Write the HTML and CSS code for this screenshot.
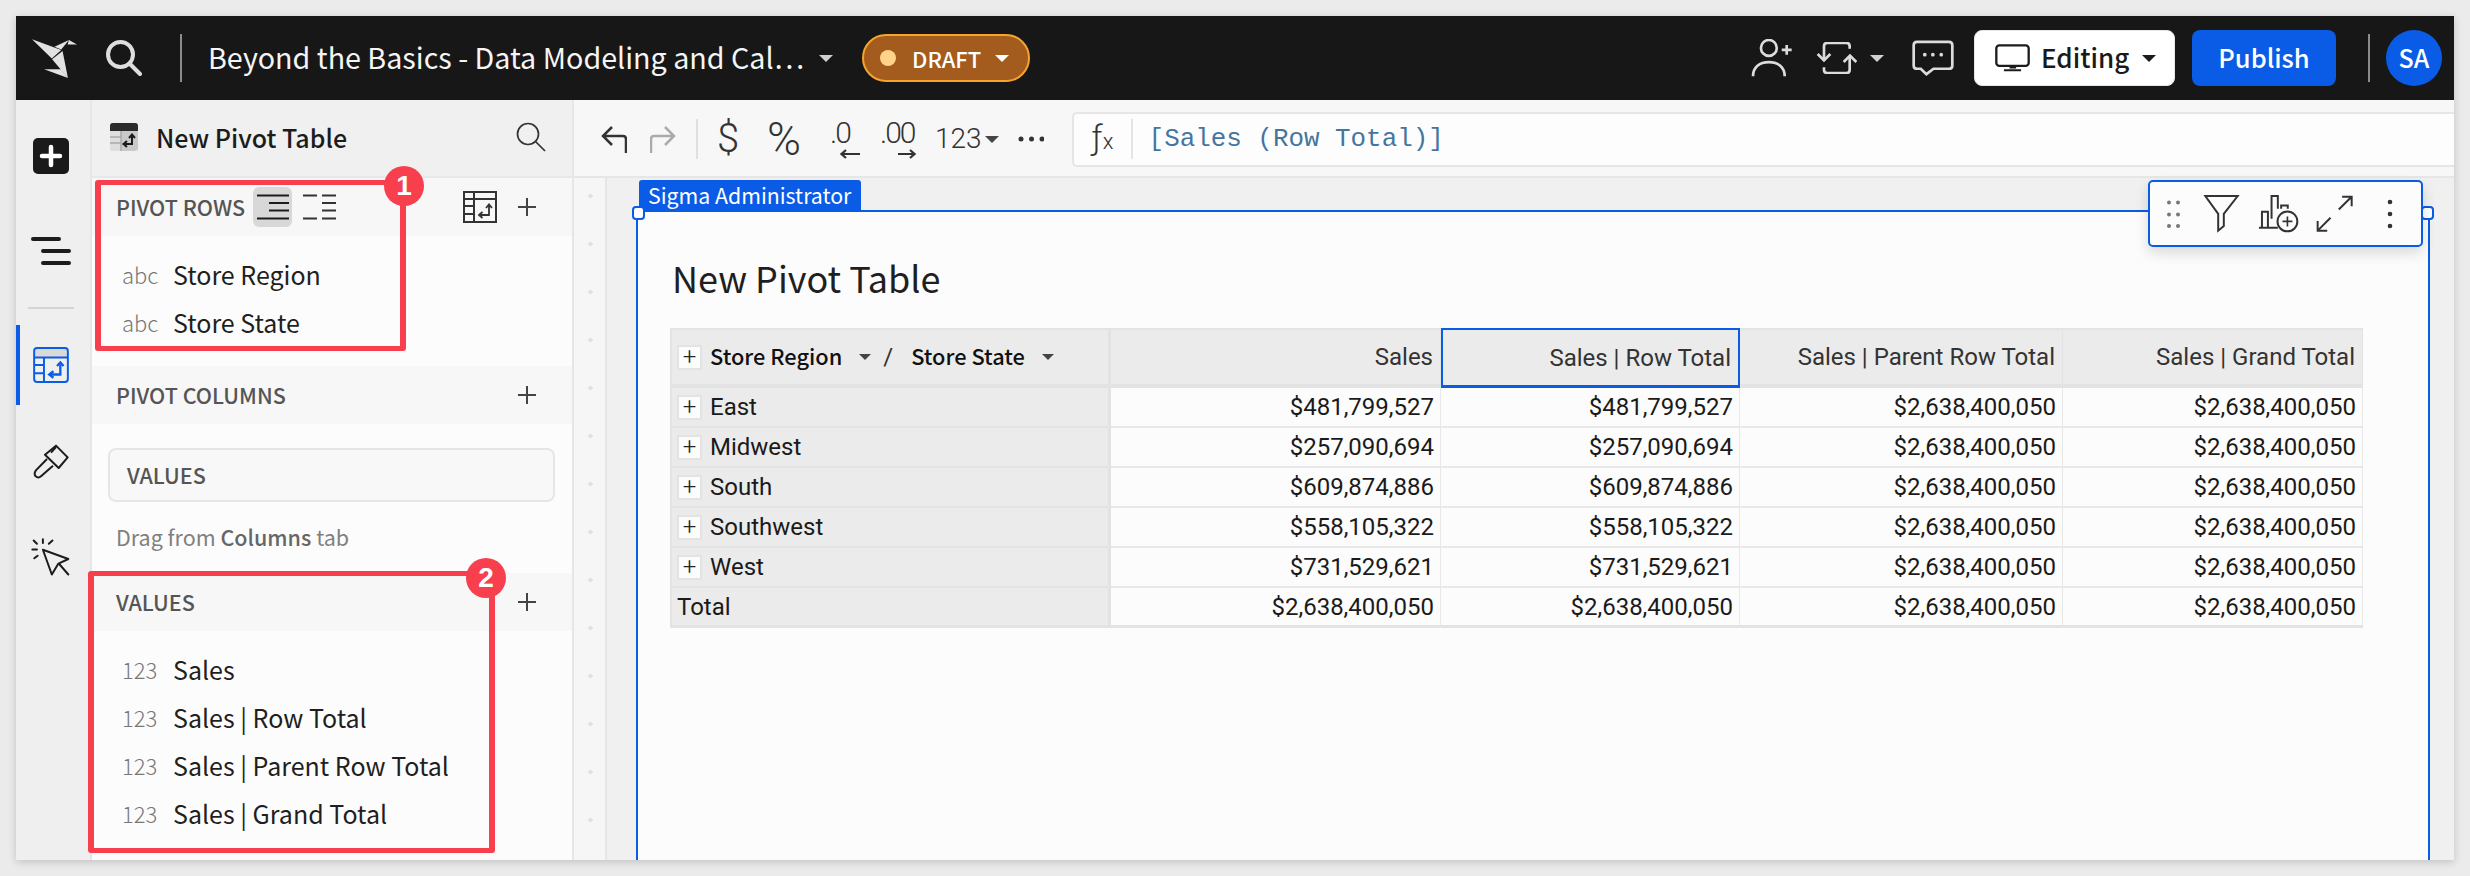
FILE: index.html
```html
<!DOCTYPE html>
<html lang="en">
<head>
<meta charset="utf-8">
<title>New Pivot Table</title>
<link rel="stylesheet" href="styles.css">
</head>
<body>
<div class="app">
  <header class="topbar">
    <svg class="logo" width="45" height="39" viewBox="48 62 134 116"><g fill="#e2e2e2"><path d="M48 63 135 95 107 120Z"/><path d="M115 85 158 65 135 93Z"/><path d="M158 65 182 78 154 78Z"/><path d="M108 122 139 98 155 178Z"/><path d="M84 152 135 152 155 178Z"/></g></svg>
    <svg class="top-search" width="36" height="36" viewBox="0 0 36 36" fill="none" stroke="#dedede" stroke-width="4" stroke-linecap="round"><circle cx="14.5" cy="14.5" r="12.5"/><path d="M23.5 23.5 34 34"/></svg>
    <span class="vbar bar-a"></span>
    <span class="doc-title">Beyond the Basics - Data Modeling and Cal…</span>
    <span class="caret caret-light doc-caret"></span>
    <button class="draft"><span class="draft-dot"></span><span>DRAFT</span><span class="caret caret-white draft-caret"></span></button>
    <span class="spacer"></span>
    <svg width="42" height="38" viewBox="40 65 125 115" fill="none" stroke="#dcdcdc" stroke-width="8"><circle cx="93" cy="92" r="24"/><path d="M45 178C45 150 65 135 93 135S141 150 141 178"/><path d="M147 83V113M132 98H162"/></svg>
    <svg class="ml-23" width="42" height="32" viewBox="232 72 124 96" fill="none" stroke="#dcdcdc" stroke-width="8"><path d="M255 125V85Q255 75 265 75H322Q332 75 332 85V92"/><path d="M332 115V155Q332 165 322 165H265Q255 165 255 155V148"/><path d="M236 108 255 127 274 108M314 132 333 113 352 132"/></svg>
    <span class="caret caret-light swap-caret"></span>
    <svg class="ml-28" width="42" height="36" viewBox="520 70 125 106" fill="none" stroke="#dcdcdc" stroke-width="8"><path d="M535 75H630Q640 75 640 85V145Q640 155 630 155H584L563 171 546 155H535Q525 155 525 145V85Q525 75 535 75Z"/><g fill="#dcdcdc" stroke="none"><circle cx="558" cy="113" r="5.5"/><circle cx="582" cy="113" r="5.5"/><circle cx="607" cy="113" r="5.5"/></g></svg>
    <button class="editing">
      <svg width="35" height="28" viewBox="763 78 106 84" fill="none" stroke="#1c1c1c" stroke-width="7"><rect x="767" y="82" width="98" height="62" rx="9"/><path d="M790 157H842M807 149H827" stroke-width="6"/></svg>
      <span class="editing-label">Editing</span>
      <span class="caret caret-dark editing-caret"></span>
    </button>
    <button class="publish">Publish</button>
    <span class="vbar bar-b"></span>
    <span class="avatar">SA</span>
  </header>

  <div class="main">
    <nav class="rail">
      <svg class="rail-add" width="36" height="36" viewBox="0 0 36 36"><rect width="36" height="36" rx="5" fill="#1a1a1a"/><path d="M18 9V27M9 18H27" stroke="#fff" stroke-width="4.5" stroke-linecap="round"/></svg>
      <svg class="rail-menu" width="40" height="30" viewBox="0 0 40 30" stroke="#1c1c1c" stroke-width="4" stroke-linecap="round"><path d="M2 3H28M12 15H38M12 27H38"/></svg>
      <span class="rail-div"></span>
      <span class="rail-active">
        <svg width="36" height="36" viewBox="39 53 109 110" fill="none" stroke="#0a5ce6" stroke-width="6"><path d="M45 85V66Q45 59 52 59H135Q142 59 142 66V85Z" fill="#d9d9d9" stroke="none"/><rect x="42" y="56" width="103" height="104" rx="9"/><path d="M42 85H145M72 85V160M42 108H72M42 133H72"/><path d="M122 106V137H92" stroke-width="7"/><path d="M101 127 88 137 101 147M112 111 122 100 132 111" stroke-width="7"/></svg>
      </span>
      <svg class="rail-brush" width="36" height="35" viewBox="36 345 108 105" fill="none" stroke="#1c1c1c" stroke-width="6" stroke-linejoin="round"><path d="M105 350 140 385 113 417 72 377Z"/><path d="M90 371 105 354"/><path d="M78 390 44 425Q38 435 44 442 52 449 60 442L96 410"/></svg>
      <svg class="rail-cursor" width="39" height="38" viewBox="32 625 118 114" fill="none" stroke="#1c1c1c" stroke-width="6" stroke-linecap="round" stroke-linejoin="round"><path d="M68 660 145 688 115 702 95 735Z"/><path d="M118 704 145 735M68 628V640M40 632 50 642M97 632 86 642M36 659H50M42 686 52 678"/></svg>
    </nav>

    <aside class="panel">
      <div class="panel-head">
        <svg width="28" height="28" viewBox="0 0 28 28"><rect width="28" height="28" rx="3" fill="#c9c9c9"/><path d="M3 0H25Q28 0 28 3V8H0V3Q0 0 3 0Z" fill="#2b2b2b"/><path d="M0 8H11V28H3Q0 28 0 25Z" fill="#dedede"/><path d="M0 14H11M0 20H11M11 8V28" stroke="#aaa" stroke-width="1.5"/><path d="M22 12V21H14M17 18 13.5 21 17 24M19 15 22 11.500 25 15" fill="none" stroke="#1c1c1c" stroke-width="2"/></svg>
        <span class="panel-title">New Pivot Table</span>
        <svg class="panel-search" width="30" height="30" viewBox="0 0 30 30" fill="none" stroke="#333" stroke-width="1.700"><circle cx="12" cy="12" r="10.500"/><path d="M19.500 19.500 29 29"/></svg>
      </div>

      <div class="sec-head">
        <span class="sec-label">PIVOT ROWS</span>
        <span class="toggle toggle-on"><svg width="32" height="26" viewBox="0 0 32 26" stroke="#1c1c1c" stroke-width="2"><path d="M0 1.500H32M12 9H32M12 16.500H32M0 24.500H32"/></svg></span>
        <span class="toggle"><svg width="33" height="26" viewBox="0 0 33 26" stroke="#333" stroke-width="2"><path d="M0 1.500H14M19 1.500H33M19 9H33M19 16.500H33M0 24.500H14M19 24.500H33"/></svg></span>
        <span class="spacer"></span>
        <svg class="sec-pivot" width="34" height="32" viewBox="0 0 34 32" fill="none" stroke="#333" stroke-width="2"><rect x="1" y="1" width="32" height="30"/><path d="M1 8H33M11 1V31M1 15H11M1 23H11"/><path d="M26 14V24H16M19.500 21 16 24 19.500 27M23 17 26 13.500 29 17" stroke-width="1.800"/></svg>
        <svg class="sec-plus sec-plus-near" width="18" height="18" viewBox="0 0 18 18" stroke="#444" stroke-width="2"><path d="M9 0V18M0 9H18"/></svg>
      </div>
      <ul class="fields fields-rows">
        <li class="field"><span class="ftype">abc</span><span>Store Region</span></li>
        <li class="field"><span class="ftype">abc</span><span>Store State</span></li>
      </ul>

      <div class="sec-head">
        <span class="sec-label">PIVOT COLUMNS</span>
        <span class="spacer"></span>
        <svg class="sec-plus" width="18" height="18" viewBox="0 0 18 18" stroke="#444" stroke-width="2"><path d="M9 0V18M0 9H18"/></svg>
      </div>
      <div class="dropbox">VALUES</div>
      <p class="hint">Drag from <b>Columns</b> tab</p>

      <div class="sec-head">
        <span class="sec-label">VALUES</span>
        <span class="spacer"></span>
        <svg class="sec-plus" width="18" height="18" viewBox="0 0 18 18" stroke="#444" stroke-width="2"><path d="M9 0V18M0 9H18"/></svg>
      </div>
      <ul class="fields">
        <li class="field"><span class="ftype">123</span><span>Sales</span></li>
        <li class="field"><span class="ftype">123</span><span>Sales | Row Total</span></li>
        <li class="field"><span class="ftype">123</span><span>Sales | Parent Row Total</span></li>
        <li class="field"><span class="ftype">123</span><span>Sales | Grand Total</span></li>
      </ul>
    </aside>

    <section class="work">
      <div class="toolbar">
        <svg class="t-undo" width="26" height="27" viewBox="0 0 26 27" fill="none" stroke="#333" stroke-width="2.500"><path d="M25 27V13Q25 10 22 10H2M11 1 2 10 11 19"/></svg>
        <svg class="t-redo" width="26" height="27" viewBox="0 0 26 27" fill="none" stroke="#aaa" stroke-width="2.500"><path d="M1 27V13Q1 10 4 10H24M15 1 24 10 15 19"/></svg>
        <span class="t-sep"></span>
        <span class="t-glyph t-dollar">$</span>
        <span class="t-glyph t-pct">%</span>
        <span class="t-dec t-dec1"><span class="t-dec-num">.0</span><svg width="20" height="10" viewBox="0 0 20 10" fill="none" stroke="#333" stroke-width="2.200"><path d="M20 5H2M6 1 1.500 5 6 9"/></svg></span>
        <span class="t-dec t-dec2"><span class="t-dec-num">.00</span><svg width="18" height="10" viewBox="0 0 18 10" fill="none" stroke="#333" stroke-width="2.200"><path d="M0 5H16M12 1 16.500 5 12 9"/></svg></span>
        <span class="t-num">123</span>
        <span class="caret caret-mid t-caret"></span>
        <svg class="t-more" width="26" height="6" viewBox="0 0 26 6" fill="#333"><circle cx="3" cy="3" r="2.500"/><circle cx="13.500" cy="3" r="2.500"/><circle cx="24" cy="3" r="2.500"/></svg>
        <div class="formula">
          <span class="fx"><span class="fx-f">ƒ</span><span class="fx-x">x</span></span>
          <span class="fx-div"></span>
          <code class="formula-text">[Sales (Row Total)]</code>
        </div>
      </div>

      <div class="canvas">
        <div class="gutter"></div>
        <div class="sheet">
          <div class="element">
            <span class="owner-tag">Sigma Administrator</span>
            <span class="handle handle-l"></span>
            <span class="handle handle-r"></span>
            <div class="float-tools">
              <svg width="16" height="28" viewBox="0 0 16 28" fill="#777"><circle cx="3" cy="2.500" r="2"/><circle cx="12" cy="2.500" r="2"/><circle cx="3" cy="14.500" r="2"/><circle cx="12" cy="14.500" r="2"/><circle cx="3" cy="26" r="2"/><circle cx="12" cy="26" r="2"/></svg>
              <svg class="ft-funnel" width="37" height="39" viewBox="190 76 112 116" fill="none" stroke="#333" stroke-width="6"><path d="M197 81H295L253 135V172L236 186V135Z"/></svg>
              <svg class="ft-bars" width="41" height="39" viewBox="352 76 124 116" fill="none" stroke="#333" stroke-width="6"><path d="M355 177H412M364 177V129H382V177M393 150V81H412V120M422 120V110H442V120"/><circle cx="441" cy="158" r="30"/><path d="M441 143V173M426 158H456" stroke-width="5"/></svg>
              <svg class="ft-expand" width="37" height="37" viewBox="526 76 112 112" fill="none" stroke="#333" stroke-width="6"><path d="M595 120 633 82M605 81H634V110M570 145 532 183M531 155V184H560"/></svg>
              <svg class="ft-kebab" width="6" height="30" viewBox="0 0 6 30" fill="#333"><circle cx="3" cy="3" r="2.300"/><circle cx="3" cy="15" r="2.300"/><circle cx="3" cy="27" r="2.300"/></svg>
            </div>
            <h1 class="el-title">New Pivot Table</h1>
            <table class="pivot">
              <colgroup><col class="c0"><col class="c1"><col class="c2"><col class="c3"><col class="c4"></colgroup>
              <thead>
                <tr>
                  <th class="corner"><span class="corner-in"><span class="exp">+</span><span class="hname">Store Region</span><span class="caret caret-mid h-caret"></span><span class="slash">/</span><span class="hname hname2">Store State</span><span class="caret caret-mid h-caret2"></span></span></th>
                  <th>Sales</th><th class="sel">Sales | Row Total</th><th>Sales | Parent Row Total</th><th>Sales | Grand Total</th>
                </tr>
              </thead>
              <tbody>
                <tr><th class="rowh"><span class="rowh-in"><span class="exp">+</span>East</span></th><td>$481,799,527</td><td>$481,799,527</td><td>$2,638,400,050</td><td>$2,638,400,050</td></tr>
                <tr><th class="rowh"><span class="rowh-in"><span class="exp">+</span>Midwest</span></th><td>$257,090,694</td><td>$257,090,694</td><td>$2,638,400,050</td><td>$2,638,400,050</td></tr>
                <tr><th class="rowh"><span class="rowh-in"><span class="exp">+</span>South</span></th><td>$609,874,886</td><td>$609,874,886</td><td>$2,638,400,050</td><td>$2,638,400,050</td></tr>
                <tr><th class="rowh"><span class="rowh-in"><span class="exp">+</span>Southwest</span></th><td>$558,105,322</td><td>$558,105,322</td><td>$2,638,400,050</td><td>$2,638,400,050</td></tr>
                <tr><th class="rowh"><span class="rowh-in"><span class="exp">+</span>West</span></th><td>$731,529,621</td><td>$731,529,621</td><td>$2,638,400,050</td><td>$2,638,400,050</td></tr>
                <tr class="total"><th class="rowh"><span class="rowh-in">Total</span></th><td>$2,638,400,050</td><td>$2,638,400,050</td><td>$2,638,400,050</td><td>$2,638,400,050</td></tr>
              </tbody>
            </table>
          </div>
        </div>
      </div>
    </section>
  </div>
</div>

<div class="note note-1"><span class="note-badge">1</span></div>
<div class="note note-2"><span class="note-badge">2</span></div>
</body>
</html>
```

FILE: styles.css
```css
* { box-sizing: border-box; }
html, body { margin: 0; height: 100%; }
body {
  background: #ebebeb;
  padding: 16px;
  font-family: "Noto Sans CJK SC", "Noto Sans", sans-serif;
  color: #1a1a1a;
  overflow: hidden;
}
button { font-family: inherit; border: 0; padding: 0; }
svg { display: block; flex: none; }
ul { list-style: none; margin: 0; padding: 0; }

.app {
  width: 2438px;
  height: 844px;
  display: flex;
  flex-direction: column;
  background: #f7f7f7;
  box-shadow: 0 2px 8px rgba(0, 0, 0, .18);
  overflow: hidden;
}
.spacer { flex: 1; }
.ml-23 { margin-left: 23px; }
.ml-28 { margin-left: 28px; }

/* carets */
.caret { display: block; flex: none; width: 0; height: 0; border-style: solid; border-color: transparent; border-width: 7px 7px 0; }
.caret-light { border-top-color: #d0d0d0; }
.caret-white { border-top-color: #fff; }
.caret-dark { border-top-color: #1c1c1c; }
.caret-mid { border-top-color: #444; }

/* top bar */
.topbar { height: 84px; flex: none; background: #171717; display: flex; align-items: center; padding-left: 16px; }
.top-search { margin-left: 29px; }
.vbar { display: block; flex: none; width: 2px; height: 48px; background: #8c8c8c; }
.bar-a { margin-left: 38px; }
.doc-title { margin-left: 26px; width: 594px; font-size: 28.700px; line-height: 40px; padding-bottom: 3px; color: #f5f5f5; white-space: nowrap; }
.doc-caret { margin-left: 17px; }
.draft {
  margin-left: 29px; width: 168px; height: 48px; border: 2px solid #f5a52e; border-radius: 24px; background: #a35b1e;
  color: #fff; display: flex; align-items: center; padding-left: 16px; font-size: 22px; font-weight: 500; line-height: 30px;
}
.draft-dot { width: 16px; height: 16px; border-radius: 50%; background: #ffd38a; margin-right: 16px; }
.draft-caret { margin-left: 14px; }
.swap-caret { margin-left: 12px; }
.editing {
  margin-left: 20px; width: 201px; height: 56px; background: #fff; border-radius: 8px; border: 1px solid #e6e6e6;
  display: flex; align-items: center; padding-left: 20px; color: #1a1a1a;
}
.editing-label { margin-left: 11px; font-size: 26px; font-weight: 500; line-height: 36px; padding-bottom: 2px; }
.editing-caret { margin-left: 13px; }
.publish {
  margin-left: 17px; width: 144px; height: 56px; background: #0a5ce6; border-radius: 8px; color: #fff;
  font-size: 25.500px; font-weight: 500; line-height: 36px; padding-bottom: 2px;
}
.bar-b { margin-left: 32px; }
.avatar {
  margin-left: 16px; margin-right: 12px; width: 56px; height: 56px; border-radius: 50%; background: #0a5ce6; color: #fff;
  display: flex; align-items: center; justify-content: center; font-size: 25px; font-weight: 500; padding-bottom: 2px;
}

/* layout */
.main { flex: 1; display: flex; min-height: 0; }

/* rail */
.rail { width: 76px; flex: none; background: #efefef; border-right: 2px solid #e6e6e6; position: relative; display: flex; flex-direction: column; align-items: flex-start; }
.rail-add { margin: 38px 0 0 17px; }
.rail-menu { margin: 62px 0 0 15px; }
.rail-div { display: block; width: 46px; height: 2px; background: #d4d4d4; margin: 41px 0 0 12px; }
.rail-active { display: block; width: 100%; height: 80px; margin-top: 16px; border-left: 4px solid #0a5ce6; padding: 22px 0 0 13px; }
.rail-brush { margin: 39px 0 0 17px; }
.rail-cursor { margin: 59px 0 0 15px; }

/* panel */
.panel { width: 482px; flex: none; background: #fcfcfc; border-right: 2px solid #e6e6e6; }
.panel-head { height: 78px; background: #f0f0f0; border-bottom: 2px solid #e8e8e8; display: flex; align-items: center; padding: 0 26px 2px 18px; }
.panel-title { margin-left: 18px; flex: 1; font-size: 25px; font-weight: 500; line-height: 36px; color: #1c1c1c; }
.sec-head { height: 58px; background: #f7f7f7; display: flex; align-items: center; padding: 0 36px 0 24px; }
.sec-label { font-size: 21.500px; font-weight: 500; line-height: 30px; color: #555; }
.toggle { width: 39px; height: 40px; border-radius: 6px; display: flex; align-items: center; justify-content: center; margin-left: 8px; }
.toggle-on { background: #d8d8d8; margin-left: 8px; }
.sec-plus { margin-left: 22px; }
.sec-plus-near { margin-left: 21px; }
.fields { padding-top: 14px; }
.fields-rows { padding-bottom: 20px; }
.field { height: 48px; display: flex; align-items: center; padding-left: 30px; font-size: 25px; line-height: 36px; color: #1f1f1f; white-space: nowrap; }
.ftype { width: 51px; font-size: 22px; font-weight: 300; color: #777; }
.dropbox { margin: 24px 17px 0 16px; height: 54px; border: 2px solid #e6e6e6; border-radius: 8px; background: #f8f8f8; padding: 0 0 2px 17px; display: flex; align-items: center; font-size: 21.500px; font-weight: 500; color: #555; }
.hint { margin: 0 0 0 24px; height: 71px; padding-top: 17px; font-size: 21.500px; line-height: 36px; color: #808080; }
.hint b { font-weight: 500; color: #666; }

/* workspace */
.work { flex: 1; min-width: 0; display: flex; flex-direction: column; }
.toolbar { height: 78px; flex: none; background: #f7f7f7; border-bottom: 2px solid #e6e6e6; display: flex; align-items: center; padding: 2px 0 0 27px; }
.t-redo { margin-left: 23px; }
.t-sep { display: block; width: 2px; height: 40px; background: #e0e0e0; margin-left: 20px; }
.t-glyph { font-family: Roboto, sans-serif; font-weight: 300; color: #333; text-align: center; display: block; line-height: 40px; }
.t-dollar { margin-left: 13px; width: 34px; font-size: 40px; }
.t-pct { margin-left: 16px; width: 46px; font-size: 46px; }
.t-dec { display: flex; flex-direction: column; height: 44px; color: #333; }
.t-dec svg { align-self: flex-end; }
.t-dec-num { font-family: Roboto, sans-serif; font-size: 30px; font-weight: 300; line-height: 32px; letter-spacing: -2px; }
.t-dec1 { margin-left: 23px; width: 30px; }
.t-dec2 { margin-left: 20px; width: 36px; }
.t-num { margin-left: 19px; font-family: Roboto, sans-serif; font-size: 28px; font-weight: 300; line-height: 36px; color: #333; }
.t-caret { margin-left: 3px; }
.t-more { margin-left: 19px; }
.formula {
  margin-left: 28px; flex: 1; height: 55px; background: #fdfdfd; border: 2px solid #e6e6e6; border-right: 0; border-radius: 5px 0 0 5px;
  display: flex; align-items: center; padding-left: 18px;
}
.fx { width: 39px; font-family: Roboto, sans-serif; color: #333; display: flex; align-items: baseline; }
.fx-f { font-size: 34px; font-weight: 300; line-height: 40px; }
.fx-x { font-size: 22px; font-weight: 300; line-height: 40px; }
.fx-div { display: block; width: 2px; height: 40px; background: #e4e4e4; }
.formula-text { margin-left: 16px; font-family: "Liberation Mono", monospace; font-size: 25.900px; color: #45759f; }

/* canvas */
.canvas { flex: 1; min-height: 0; display: flex; }
.gutter {
  width: 33px; flex: none; border-right: 2px solid #e6e6e6; background-color: #f6f6f6;
  background-image: radial-gradient(circle, #e2e2e2 2px, transparent 2.500px);
  background-size: 33px 48px; background-position: 0 -6px;
}
.sheet { flex: 1; min-width: 0; background: #f0f0f0; padding: 32px 24px 0 29px; display: flex; }
.element { flex: 1; position: relative; background: #fcfcfc; border: 2px solid #0a5ce6; border-bottom: 0; padding: 36px 0 0 32px; }
.owner-tag {
  position: absolute; left: 1px; top: -32px; height: 31px; width: 222px; background: #0a5ce6; color: #fff; border-radius: 3px 3px 0 0;
  font-size: 21.300px; line-height: 30px; padding-left: 9px; white-space: nowrap;
}
.handle { position: absolute; top: -6px; width: 13px; height: 14px; background: #fff; border: 2px solid #0a5ce6; border-radius: 4px; }
.handle-l { left: -6px; }
.handle-r { right: -6px; }
.float-tools {
  position: absolute; right: 5px; top: -32px; width: 275px; height: 67px; background: #fcfcfc; border: 2px solid #0a5ce6; border-radius: 5px;
  box-shadow: 0 6px 14px rgba(0, 0, 0, .14); display: flex; align-items: center; padding-left: 16px; z-index: 2;
}
.ft-funnel { margin-left: 21px; }
.ft-bars { margin-left: 18px; }
.ft-expand { margin-left: 17px; }
.ft-kebab { margin-left: 34px; }
.el-title { margin: 0 0 22px 2px; font-size: 36px; font-weight: 400; line-height: 58px; color: #1f1f1f; }

/* table */
.pivot { table-layout: fixed; width: 1693px; border-collapse: separate; border-spacing: 0; font-family: Roboto, sans-serif; font-size: 24px; color: #1a1a1a; }
.c0 { width: 441px; }
.c1 { width: 330px; }
.c2 { width: 299px; }
.c3 { width: 323px; }
.c4 { width: 300px; }
.pivot th, .pivot td { padding: 0 10px 0 0; text-align: right; font-weight: 400; white-space: nowrap; }
.pivot thead th { height: 60px; background: #ebebeb; border-top: 2px solid #e3e3e3; border-bottom: 4px solid #e3e3e3; border-right: 1px solid #e3e3e3; color: #333; padding-right: 7px; }
.pivot thead th.corner { border-left: 2px solid #e3e3e3; border-right: 3px solid #e3e3e3; padding: 0 0 0 5px; text-align: left; }
.pivot thead th.sel { border: 2px solid #0a5ce6; border-bottom-width: 3px; }
.pivot td { height: 40px; background: #fcfcfc; border-bottom: 2px solid #e8e8e8; border-right: 1px solid #e8e8e8; padding-right: 6px; }
.pivot .rowh { background: #ebebeb; border-left: 2px solid #e3e3e3; border-right: 3px solid #e3e3e3; border-bottom: 2px solid #e3e3e3; padding: 0 0 0 5px; text-align: left; }
.pivot .total td { border-bottom: 3px solid #e3e3e3; }
.pivot .total .rowh { border-bottom-width: 3px; }
.corner-in, .rowh-in { display: flex; align-items: center; }
.exp {
  width: 25px; height: 25px; flex: none; background: #fcfcfc; border: 2px solid #e3e3e3; margin-right: 8px;
  display: flex; align-items: center; justify-content: center; font-size: 24px; font-weight: 300; line-height: 1; color: #222;
}
.hname { font-family: "Noto Sans CJK SC", "Noto Sans", sans-serif; font-weight: 500; font-size: 21.800px; line-height: 30px; padding-bottom: 2px; color: #111; }
.h-caret { margin-left: 17px; border-width: 6px 6px 0; }
.slash { margin-left: 12px; font-size: 24px; }
.hname2 { margin-left: 18px; }
.h-caret2 { margin-left: 17px; border-width: 6px 6px 0; }

/* annotations */
.note { position: absolute; border: solid #f83f4e; border-width: 5px 6px; border-radius: 3px; }
.note-1 { left: 95px; top: 180px; width: 311px; height: 171px; }
.note-2 { left: 88px; top: 571px; width: 407px; height: 282px; }
.note-badge {
  position: absolute; width: 40px; height: 40px; border-radius: 50%; background: #f83f4e; color: #fff;
  display: flex; align-items: center; justify-content: center; font-family: "Liberation Sans", sans-serif; font-size: 28px; font-weight: 700;
}
.note-1 .note-badge { right: -24px; top: -19px; }
.note-2 .note-badge { right: -17px; top: -18px; }
```
